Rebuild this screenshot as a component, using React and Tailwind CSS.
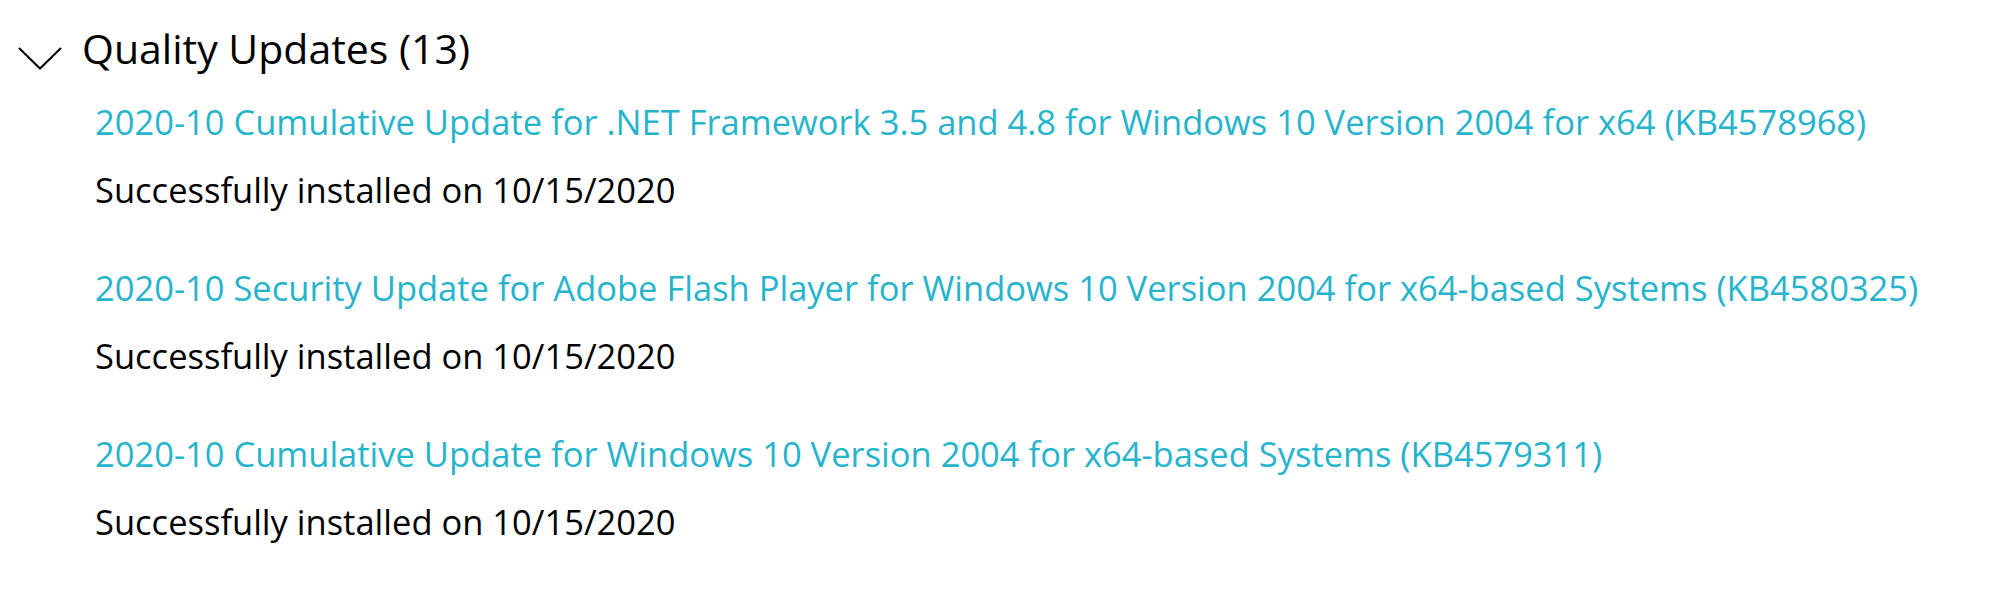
import React from 'react';

const updates = [
  {
    id: 'KB4578968',
    title: '2020-10 Cumulative Update for .NET Framework 3.5 and 4.8 for Windows 10 Version 2004 for x64 (KB4578968)',
    status: 'Successfully installed on 10/15/2020',
  },
  {
    id: 'KB4580325',
    title: '2020-10 Security Update for Adobe Flash Player for Windows 10 Version 2004 for x64-based Systems (KB4580325)',
    status: 'Successfully installed on 10/15/2020',
  },
  {
    id: 'KB4579311',
    title: '2020-10 Cumulative Update for Windows 10 Version 2004 for x64-based Systems (KB4579311)',
    status: 'Successfully installed on 10/15/2020',
  },
];

// Thin chevron used by the collapsible group header
const ChevronDown = () => (
  <svg width="44" height="23" viewBox="0 0 44 23" fill="none" className="mt-[29px] shrink-0">
    <path d="M1 1 L22 21.5 L43 1" stroke="#000" strokeWidth="2" />
  </svg>
);

export default function App() {
  return (
    <div className="min-h-[600px] w-[2000px] bg-white pt-[18px] font-['Open_Sans',sans-serif] text-black">
      {/* Group header */}
      <div className="flex items-start pl-[18px]">
        <ChevronDown />
        <h2 className="ml-[20px] text-[41px] leading-[60px] font-normal">Quality Updates (13)</h2>
      </div>

      {/* Update list */}
      <ul className="mt-[10px] flex flex-col gap-[30px] pl-[95px]">
        {updates.map((u) => (
          <li key={u.id} className="flex flex-col">
            <a href="#" className="text-[34.5px] leading-[68px] whitespace-nowrap text-[#26b4cc]">
              {u.title}
            </a>
            <span className="text-[34.5px] leading-[68px] whitespace-nowrap">{u.status}</span>
          </li>
        ))}
      </ul>
    </div>
  );
}
